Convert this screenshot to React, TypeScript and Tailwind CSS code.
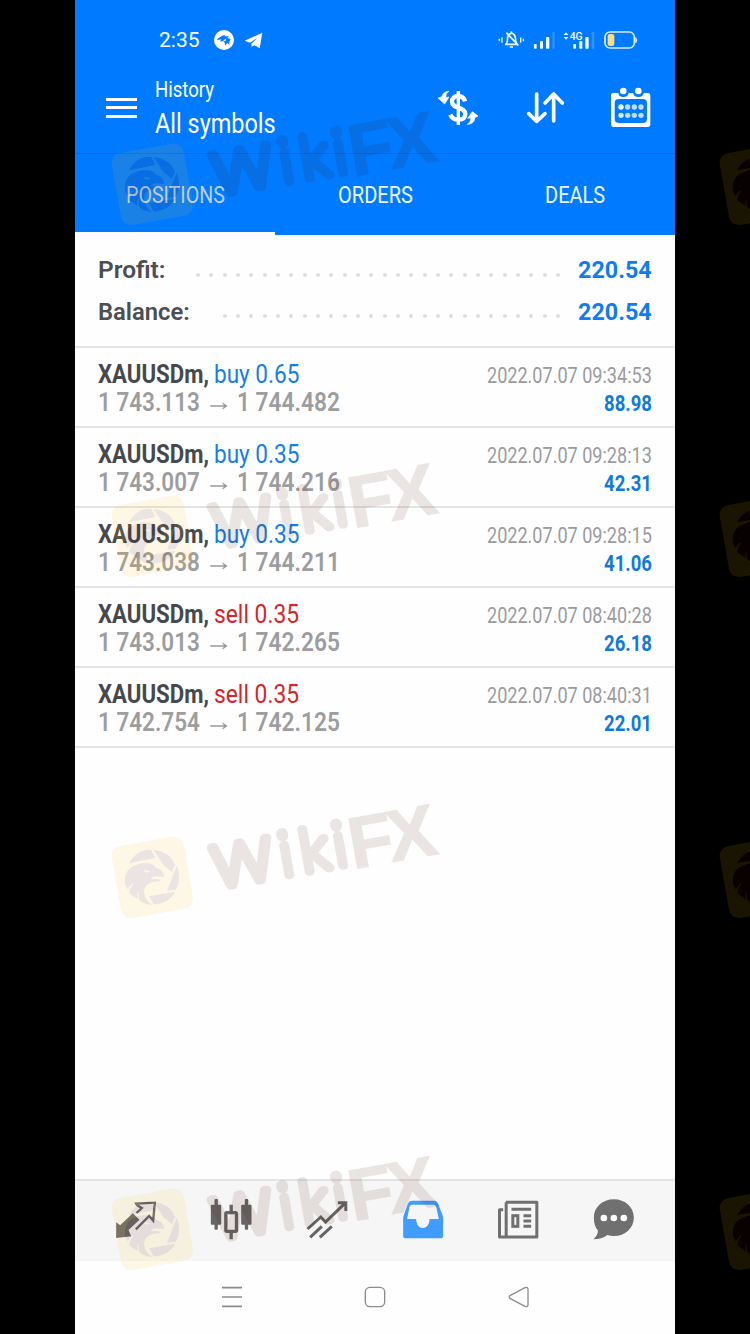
import { useLayoutEffect, useRef, useState } from 'react';
import type { ReactNode } from 'react';
import { clsx } from 'clsx';

type Deal = {
  side: 'buy' | 'sell';
  volume: string;
  open: string;
  close: string;
  time: string;
  profit: string;
};

const deals: Deal[] = [
  { side: 'buy', volume: '0.65', open: '1 743.113', close: '1 744.482', time: '2022.07.07 09:34:53', profit: '88.98' },
  { side: 'buy', volume: '0.35', open: '1 743.007', close: '1 744.216', time: '2022.07.07 09:28:13', profit: '42.31' },
  { side: 'buy', volume: '0.35', open: '1 743.038', close: '1 744.211', time: '2022.07.07 09:28:15', profit: '41.06' },
  { side: 'sell', volume: '0.35', open: '1 743.013', close: '1 742.265', time: '2022.07.07 08:40:28', profit: '26.18' },
  { side: 'sell', volume: '0.35', open: '1 742.754', close: '1 742.125', time: '2022.07.07 08:40:31', profit: '22.01' },
];

// Condensed text: squeezes the regular face to a fixed width
function Fit({ width, className, children }: { width: number; className?: string; children: ReactNode }) {
  const ref = useRef<HTMLSpanElement>(null);
  const [scale, setScale] = useState(1);

  useLayoutEffect(() => {
    if (ref.current) setScale(width / ref.current.offsetWidth);
  }, [width]);

  return (
    <span className={clsx('block shrink-0 whitespace-nowrap', className)} style={{ width }}>
      <span ref={ref} className="inline-block origin-left align-top" style={{ transform: `scaleX(${scale})` }}>
        {children}
      </span>
    </span>
  );
}

function StatusBar() {
  return (
    <div className="flex h-[70px] items-center pt-[10px] pl-[84px] text-white">
      <Fit width={41} className="text-[21px] leading-6">2:35</Fit>
      <svg className="ml-[14px] h-5 w-5" viewBox="0 0 60 60">
        <circle cx="30" cy="30" r="30" fill="#fff" />
        <path
          d="M8 31 C14 22 23 16 35 14 L31 19 L45 19 L40 24 L50 27 C47 33 45 39 46 45 L39 38 L34 48 C33 41 32 36 27 33 L18 35 L22 28 Z"
          fill="#007aff"
        />
        <path d="M27 33 L37 25 L34 34 Z" fill="#fff" />
      </svg>
      <svg className="ml-[10px] h-[19px] w-[19px]" viewBox="0 0 57 57">
        <path d="M2 29 L55 5 L47 52 L32 43 L23 47 L22 38 L40 21 L18 35 Z" fill="#fff" />
      </svg>
      <div className="ml-[234px] flex items-center">
        <svg className="h-6 w-7" viewBox="366 84 84 72" fill="none" stroke="#e9f8ff" strokeWidth="5">
          <path d="M373 116v8M381 112v16M437 112v16M445 116v8" strokeWidth="4" />
          <path d="M390 133h38M394 131c5-6 3-14 4-20 2-8 7-11 11-11s10 3 12 12c0 6 0 12 4 18M409 94v6M404 141h10M394 98l36 38" />
        </svg>
        <svg className="ml-[7px] h-6 w-6" viewBox="471 84 72 72" fill="#f2fbff">
          <rect x="477" y="132" width="8" height="14" rx="2" />
          <rect x="495" y="123" width="9" height="23" rx="2" />
          <rect x="513" y="111" width="10" height="35" rx="2" />
          <rect x="532" y="96" width="7" height="50" rx="2" opacity="0.2" />
        </svg>
        <svg className="ml-[6px] h-6 w-[34px]" viewBox="561 84 102 72" fill="#f2fbff">
          <path d="M566 105l7-8 7 8zM566 111l7 8 7-8z" />
          <text x="584" y="120" fontFamily="Roboto, sans-serif" fontSize="33" fontWeight="500" textLength="39" lengthAdjust="spacingAndGlyphs">
            4G
          </text>
          <rect x="595" y="132" width="8" height="14" rx="2" />
          <rect x="613" y="123" width="9" height="23" rx="2" />
          <rect x="631" y="111" width="10" height="35" rx="2" />
          <rect x="650" y="96" width="8" height="50" rx="2" opacity="0.2" />
        </svg>
        <svg className="ml-[7px] h-6 w-[35px]" viewBox="684 84 105 72">
          <rect x="690" y="96" width="88" height="48" rx="15" fill="none" stroke="#d8edf5" strokeWidth="5" />
          <rect x="698" y="102" width="20" height="36" rx="7" fill="#ffdc7c" />
          <path d="M781 111c7 2 7 17 0 19z" fill="#d8edf5" />
        </svg>
      </div>
    </div>
  );
}

function TitleBar() {
  return (
    <div className="flex h-[83px] pl-[31px] text-white">
      <div className="flex w-[31px] flex-col gap-[5.4px] pt-[28px]">
        <div className="h-[3px] bg-white" />
        <div className="h-[3px] bg-white" />
        <div className="h-[3px] bg-white" />
      </div>
      <div className="ml-[18px] w-[122px] pt-[6px]">
        <Fit width={59} className="text-[22px] leading-7">History</Fit>
        <Fit width={121} className="mt-[4px] text-[28.5px] leading-8">All symbols</Fit>
      </div>
      <div className="ml-[157px] flex gap-[38.5px] pt-[14px]">
        <svg className="h-12 w-12" viewBox="177 252 144 144" fill="none" stroke="#fff">
          <path d="M250 273v102" strokeWidth="10" />
          <path d="M270 304c-3-11-11-16-21-16-11 0-18 7-18 17 0 22 40 15 40 37 0 11-8 17-21 17-12 0-20-5-24-15" strokeWidth="13" />
          <path d="M189 294l12-4c1-9 8-15 21-16-8 5-10 11-9 19l9-2-13 21zM309 348l-10 5c0 12-7 19-22 20 8-6 11-11 10-20l-9 2 14-20z" fill="#fff" strokeWidth="2" strokeLinejoin="round" />
        </svg>
        <svg className="h-12 w-12" viewBox="438 252 144 144" fill="none" stroke="#fff" strokeWidth="11" strokeLinecap="round" strokeLinejoin="round">
          <path d="M485 282v80M461 341l24 23 25-23M536 363v-79M510 309l26-27 26 27" />
        </svg>
        <svg className="h-12 w-12" viewBox="696 252 144 144" fill="#fff">
          <path
            fillRule="evenodd"
            d="M716 279h14c1 9 7 12 15 12s14-3 16-12h14c1 9 7 12 15 12s14-3 16-12h13q7 0 7 7v87q0 8-8 8h-102q-8 0-8-8v-87q0-7 8-7zM732 297q-13 0-13 12v47q0 13 13 13h71q13 0 13-13v-47q0-12-13-12z"
          />
          <circle cx="745" cy="273" r="10" />
          <circle cx="790" cy="273" r="10" />
          <circle cx="738" cy="321" r="8" />
          <circle cx="738" cy="346" r="8" opacity="0.85" />
          {[758, 778, 798].map((cx) => (
            <g key={cx} opacity="0.75">
              <circle cx={cx} cy="321" r="8" />
              <circle cx={cx} cy="346" r="8" />
            </g>
          ))}
        </svg>
      </div>
    </div>
  );
}

function Tabs() {
  return (
    <div className="grid h-[81.5px] grid-cols-3 border-t border-[#006be6] text-[23px] leading-7 text-[#ecf8ff]">
      <div className="flex justify-center border-b-[3.5px] border-white pt-[28px] text-[#bdd0e6]">
        <Fit width={99}>POSITIONS</Fit>
      </div>
      <div className="flex justify-center pt-[28px]">
        <Fit width={75}>ORDERS</Fit>
      </div>
      <div className="flex justify-center pt-[28px]">
        <Fit width={60}>DEALS</Fit>
      </div>
    </div>
  );
}

function SummaryRow({ label, labelWidth, dots, value }: { label: string; labelWidth: number; dots: number; value: string }) {
  return (
    <div className="flex h-7 items-center justify-between pr-[23px] pl-[22.5px] text-[23px] leading-7">
      <Fit width={labelWidth} className="font-semibold text-[#4c4e53]">{label}</Fit>
      <div className="flex items-center">
        <div className="mt-[7px] mr-[18px] flex gap-[9.33px]">
          {Array.from({ length: dots }, (_, i) => (
            <span key={i} className="h-1 w-1 rounded-full bg-[#dedede]" />
          ))}
        </div>
        <Fit width={74} className="font-bold text-[#107ced]">{value}</Fit>
      </div>
    </div>
  );
}

function DealRow({ deal }: { deal: Deal }) {
  return (
    <div className="flex h-20 justify-between border-b-2 border-[#e4e4e4] pr-[23px] pl-[23px]">
      <div className="pt-[12px] text-[26px] leading-7">
        <div className="flex">
          <Fit width={111} className="font-bold text-[#46484d]">XAUUSDm,</Fit>
          <Fit width={85} className={clsx('ml-[5px]', deal.side === 'buy' ? 'text-[#137fe9]' : 'text-[#d3262b]')}>
            {deal.side} {deal.volume}
          </Fit>
        </div>
        <div className="flex font-semibold text-[#9d9d9f]">
          <Fit width={102}>{deal.open}</Fit>
          <svg className="mt-[14px] ml-[10px] h-2 w-[18px]" viewBox="0 0 54 24" fill="none" stroke="#98989a" strokeWidth="4">
            <path d="M1 12h49M38 4l11 8-11 8" />
          </svg>
          <Fit width={103} className="ml-[9px]">{deal.close}</Fit>
        </div>
      </div>
      <div className="flex flex-col items-end pt-[14px] text-[22px] leading-7">
        <Fit width={165} className="text-[#9b9b9e]">{deal.time}</Fit>
        <Fit width={48} className="font-bold text-[#107ada]">{deal.profit}</Fit>
      </div>
    </div>
  );
}

function BottomNav() {
  return (
    <div className="grid h-[82px] grid-cols-6 justify-items-center border-t-2 border-[#e3e3e3] bg-[#f6f6f6] px-[13px] pt-[14px]">
      {/* Quotes */}
      <svg className="h-12 w-12" viewBox="110.5 135 144 144" fill="none" stroke="#6a6a6a" strokeWidth="7">
        <path d="M186 166l-3-5 56-3-5 54-12-14-40 40M186 166l14 8-16 15" />
        <path d="M173 190l20 19-33 31 8 19-45 5v-47l12 9z" fill="#6a6a6a" stroke="none" />
      </svg>
      {/* Chart */}
      <svg className="h-12 w-12" viewBox="397.5 135 144 144" fill="#666">
        <rect x="409" y="164" width="31" height="60" rx="3" />
        <rect x="420" y="147" width="10" height="92" rx="3" />
        <rect x="500" y="164" width="31" height="60" rx="3" />
        <rect x="511" y="147" width="10" height="92" rx="3" />
        <rect x="454" y="188" width="32" height="56" rx="3" fill="none" stroke="#666" strokeWidth="10" />
        <path d="M465 164h10v22h-10zM465 246h10v22h-10z" />
      </svg>
      {/* Trade */}
      <svg className="h-12 w-12" viewBox="684.5 135 144 144" fill="none" stroke="#666" strokeWidth="9">
        <path d="M698 237l40-36 14 15 58-56M789 158h24v25M706 262l35-33M735 262l36-33" />
      </svg>
      {/* History */}
      <svg className="h-12 w-12" viewBox="71.5 135 144 144">
        <path
          fillRule="evenodd"
          fill="#409cff"
          d="M112 152h64q9 0 13 9l13 34q2 5 2 12v50q0 8-8 8h-104q-8 0-8-8v-50q0-7 2-12l12-34q4-9 14-9zM110 164q-5 0-7 6l-7 37h27c0 36 40 36 40 0h28l-8-37q-2-6-7-6z"
        />
      </svg>
      {/* News */}
      <svg className="h-12 w-12" viewBox="358.5 135 144 144" fill="none" stroke="#707070" strokeWidth="9">
        <path d="M394 157h93v104h-112v-82h11M395 157v104" strokeLinejoin="round" />
        <path d="M411 178h59M447 197h23M447 213h23M447 229h23" />
        <rect x="415" y="197" width="15" height="32" />
      </svg>
      {/* Messages */}
      <svg className="h-12 w-12" viewBox="645.5 135 144 144">
        <path d="M717 148c34 0 60 24 60 55s-26 55-60 55c-7 0-13-1-19-3-12 9-25 13-42 13 9-9 14-16 13-27-8-9-12-23-12-38 0-31 26-55 60-55z" fill="#707070" />
        <circle cx="687" cy="204" r="10" fill="#fff" />
        <circle cx="717" cy="204" r="10" fill="#fff" />
        <circle cx="747" cy="204" r="10" fill="#fff" />
      </svg>
    </div>
  );
}

function SystemNav() {
  return (
    <div className="flex h-[73px] items-center justify-center gap-[119.5px] pb-px">
      <svg className="h-6 w-6" viewBox="0 0 72 72" stroke="#8c8c8c" strokeWidth="5">
        <path d="M6 8h60M6 36h60M6 64h60" />
      </svg>
      <svg className="h-6 w-6" viewBox="0 0 72 72" fill="none" stroke="#8c8c8c" strokeWidth="4">
        <rect x="7" y="7" width="58" height="58" rx="14" />
      </svg>
      <svg className="h-6 w-6" viewBox="0 0 72 72" fill="none" stroke="#8c8c8c" strokeWidth="4" strokeLinejoin="round">
        <path d="M10 31L54 8q9-3 9 5v46q0 8-9 5L10 41q-7-5 0-10z" />
      </svg>
    </div>
  );
}

function Watermark({ className, logoOnly = false }: { className: string; logoOnly?: boolean }) {
  return (
    <svg className={clsx('absolute h-[140px] w-[400px] overflow-visible opacity-10', className)} viewBox="0 0 1200 420" fill="#480c00">
      <rect x="122.5" y="152.5" width="219" height="219" rx="30" fill="#ffbe14" transform="rotate(-10 232 262)" />
      <path d="M162 220C178 190 206 177 229 180L241 204Z" />
      <path d="M236 181C264 182 290 198 300 224L290 246L266 226Z" />
      <path d="M305 228C316 252 314 280 302 299L276 303Z" />
      <path d="M301 305C286 330 262 343 236 343L222 319Z" />
      <path d="M150 283C147 254 158 231 184 225C194 220 206 219 216 220C232 220 240 228 242 233C258 236 267 246 267 262C254 259 240 257 232 262C226 266 228 268 234 268L250 267L256 273C236 274 216 278 208 296C205 316 214 332 231 344C212 345 198 337 192 328L190 303C186 311 187 318 188 327C178 322 170 314 162 309C164 298 170 288 178 278C167 283 162 290 158 298Z" />
      <path d="M206 240L226 244C220 250 210 249 206 240Z" fill="#ffbe14" />
      {!logoOnly && (
        <g transform="rotate(-10)">
          <g fontFamily="Roboto, sans-serif" fontWeight="100" fontSize="172" stroke="#480c00" strokeWidth="25" strokeLinejoin="round">
            <text x="367" y="363" textLength="180" lengthAdjust="spacingAndGlyphs">W</text>
            <text x="589" y="363" textAnchor="middle">i</text>
            <text x="634" y="363">k</text>
            <text x="753" y="363" textAnchor="middle">i</text>
          </g>
          <circle cx="589" cy="238" r="18" />
          <circle cx="753" cy="238" r="18" />
          <g fontFamily="Liberation Sans, sans-serif" fontWeight="700" fontSize="218" stroke="#480c00" strokeWidth="4">
            <text x="780" y="378">F</text>
            <text x="898" y="378">X</text>
          </g>
        </g>
      )}
    </svg>
  );
}

export default function App() {
  return (
    <div className="relative h-[1334px] w-[750px] overflow-hidden bg-black font-[Roboto,sans-serif]">
      <div className="mx-auto flex h-full w-[600px] flex-col bg-[#fefefe]">
        <div className="h-[234.5px] bg-[#007aff]">
          <StatusBar />
          <TitleBar />
          <Tabs />
        </div>

        <div className="flex h-[113.5px] flex-col gap-[13.5px] border-b-2 border-[#e4e4e4] pt-[22.5px]">
          <SummaryRow label="Profit:" labelWidth={67} dots={28} value="220.54" />
          <SummaryRow label="Balance:" labelWidth={92} dots={26} value="220.54" />
        </div>

        {deals.map((deal) => (
          <DealRow key={deal.time} deal={deal} />
        ))}

        <div className="flex-1" />

        <BottomNav />
        <SystemNav />
      </div>

      <div className="pointer-events-none absolute inset-0 overflow-hidden">
        <Watermark className="top-[97px] left-[75px]" />
        <Watermark className="top-[97px] left-[683px]" logoOnly />
        <Watermark className="top-[449px] left-[75px]" />
        <Watermark className="top-[449px] left-[683px]" logoOnly />
        <Watermark className="top-[790px] left-[75px]" />
        <Watermark className="top-[790px] left-[683px]" logoOnly />
        <Watermark className="top-[1142px] left-[75px]" />
        <Watermark className="top-[1142px] left-[683px]" logoOnly />
      </div>
    </div>
  );
}
